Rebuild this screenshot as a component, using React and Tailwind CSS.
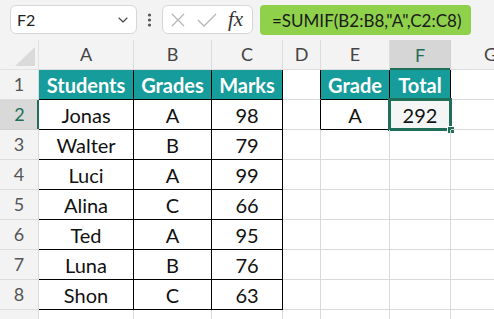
import { ChevronDown } from "lucide-react";

const cols = ["A", "B", "C", "D", "E", "F", "G"];

const cells = {
  1: { A: "Students", B: "Grades", C: "Marks", E: "Grade", F: "Total" },
  2: { A: "Jonas", B: "A", C: "98", E: "A", F: "292" },
  3: { A: "Walter", B: "B", C: "79" },
  4: { A: "Luci", B: "A", C: "99" },
  5: { A: "Alina", B: "C", C: "66" },
  6: { A: "Ted", B: "A", C: "95" },
  7: { A: "Luna", B: "B", C: "76" },
  8: { A: "Shon", B: "C", C: "63" },
  9: {},
};

function inTable(r, c) {
  if (r >= 1 && r <= 8 && (c === "A" || c === "B" || c === "C")) return true;
  if (r >= 1 && r <= 2 && (c === "E" || c === "F")) return true;
  return false;
}

function Cell({ r, c }) {
  const table = inTable(r, c);
  const header = table && r === 1;
  // D sits left of the second table, so its right edge belongs to it
  const leftOfTable = c === "D" && r <= 2;
  const selected = r === 2 && c === "F";

  let cls = "relative flex items-center justify-center border-b border-r text-[20px] ";
  if (header) cls += "bg-[#159c9b] text-white font-bold border-black ";
  else if (table) cls += "text-[#111] border-black ";
  else cls += "border-[#d9d9d9] ";
  if (leftOfTable) cls += "border-r-black ";
  if (selected) cls += "bg-[#f4f6f5] ";

  return (
    <div className={cls}>
      <span className="leading-none">{cells[r][c]}</span>
      {selected && (
        <>
          <div className="absolute -left-[2px] -top-[2px] -right-[2px] -bottom-[2px] border-[3px] border-[#1f6e57]" />
          <div className="absolute -right-[4px] -bottom-[4px] w-[6px] h-[6px] bg-[#1f6e57] outline outline-1 outline-white" />
        </>
      )}
    </div>
  );
}

export default function App() {
  return (
    <div className="w-[494px] h-[319px] overflow-hidden bg-white font-['Lato',sans-serif] text-[#1a1a1a]">

      {/* Formula bar */}
      <div className="h-[40px] bg-[#f3f3f3] flex items-start pt-[5px]">
        <div className="ml-[10px] w-[127px] h-[29px] bg-white border border-[#d6d6d6] rounded-[6px] flex items-center justify-between pl-[6px] pr-[5px]">
          <span className="text-[16px] text-[#222]">F2</span>
          <ChevronDown size={16} strokeWidth={1.6} className="text-[#444]" />
        </div>

        <svg width="25" height="29" viewBox="0 0 25 29" className="shrink-0">
          <circle cx="12.5" cy="10" r="1.6" fill="#555" />
          <circle cx="12.5" cy="15" r="1.6" fill="#555" />
          <circle cx="12.5" cy="20" r="1.6" fill="#555" />
        </svg>

        <div className="w-[91px] h-[29px] bg-white border border-[#d6d6d6] rounded-[6px] flex items-center pl-[7px]">
          <svg width="16" height="16" viewBox="0 0 16 16">
            <path d="M2 2 L14 14 M14 2 L2 14" stroke="#b5b5b5" strokeWidth="1.3" fill="none" />
          </svg>
          <svg width="22" height="16" viewBox="0 0 22 16" className="ml-[10px]">
            <path d="M2 8 L8 14 L20 2" stroke="#b5b5b5" strokeWidth="1.3" fill="none" />
          </svg>
          <span className="ml-[10px] font-['Liberation_Serif',serif] italic text-[21px] text-[#333] leading-none">
            fx
          </span>
        </div>

        <div className="ml-[7px] w-[211px] h-[30px] bg-[#8fd14b] rounded-[4px] flex items-center pl-[12px]">
          <span className="text-[17px] text-[#1a1a1a] leading-none">=SUMIF(B2:B8,"A",C2:C8)</span>
        </div>
      </div>

      {/* Sheet - column G runs past the window edge */}
      <div className="grid grid-cols-[39px_95px_78px_71px_38px_69px_61px_80px] grid-rows-[30px_repeat(9,30px)]">
        {/* select-all corner */}
        <div className="relative bg-[#f3f3f3] border-r border-b border-[#e2e2e2]">
          <svg width="22" height="20" viewBox="0 0 22 20" className="absolute left-[14px] top-[7px]">
            <polygon points="21,0 21,19 1,19" fill="#dadada" />
          </svg>
        </div>

        {cols.map((c) => (
          <div
            key={c}
            className={
              c === "F"
                ? "flex items-center justify-center bg-[#d6d6d6] text-[#1f6e57] text-[18px] border-r border-[#d0d0d0] shadow-[inset_0_-2px_0_#1f6e57]"
                : "flex items-center justify-center bg-[#f3f3f3] text-[#444] text-[18px] border-r border-b border-[#dcdcdc]"
            }
          >
            {c}
          </div>
        ))}

        {[1, 2, 3, 4, 5, 6, 7, 8, 9].map((r) => (
          <div key={r} className="contents">
            <div
              className={
                r === 2
                  ? "flex items-center justify-center bg-[#d9d9d9] text-[#1f6e57] text-[18px] border-b border-[#d0d0d0] shadow-[inset_-2px_0_0_#1f6e57]"
                  : "flex items-center justify-center bg-[#f3f3f3] text-[#555] text-[18px] border-r border-b border-[#dcdcdc]"
              }
            >
              {/* row 9 is cut off at the window edge, its number is not in view */}
              {r < 9 ? r : ""}
            </div>
            {cols.map((c) => (
              <Cell key={c} r={r} c={c} />
            ))}
          </div>
        ))}
      </div>
    </div>
  );
}
